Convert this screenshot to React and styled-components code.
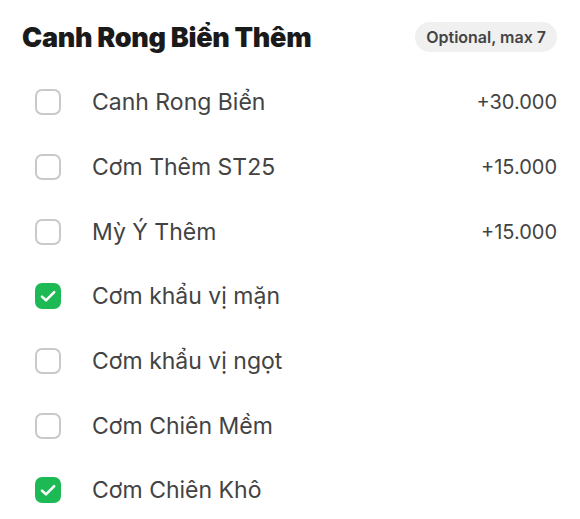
import React from 'react';
import styled, { createGlobalStyle } from 'styled-components';

const GlobalStyle = createGlobalStyle`
  body {
    margin: 0;
    background: #fff;
    font-family: Inter, "Noto Sans", sans-serif;
  }
`;

const Wrapper = styled.div`
  padding: 22px 23px 0 22px;
`;

const Header = styled.div`
  display: flex;
  justify-content: space-between;
  align-items: center;
  height: 30px;
  margin-bottom: 18px;
`;

const Title = styled.h2`
  margin: 0;
  font-size: 27px;
  font-weight: 900;
  color: #1a1a1a;
  letter-spacing: -0.3px;
`;

const Badge = styled.span`
  display: inline-flex;
  align-items: center;
  height: 30px;
  padding: 0 11px;
  border-radius: 15px;
  background: #f0f0f0;
  color: #444;
  font-size: 16px;
  font-weight: 600;
`;

const List = styled.ul`
  list-style: none;
  margin: 0;
  padding: 0;
`;

const Row = styled.li`
  display: flex;
  align-items: center;
  height: 64.7px;
  padding-left: 13px;
`;

const Box = styled.span`
  flex: none;
  width: 26px;
  height: 26px;
  box-sizing: border-box;
  border-radius: 7px;
  border: ${(p) => (p.checked ? 'none' : '2px solid #c9c9c9')};
  background: ${(p) => (p.checked ? '#1db954' : '#fff')};
  display: flex;
  align-items: center;
  justify-content: center;
`;

const Label = styled.span`
  flex: 1;
  margin-left: 31px;
  font-size: 23px;
  color: #434343;
`;

const Price = styled.span`
  font-size: 20px;
  color: #434343;
`;

const items = [
  { name: 'Canh Rong Biển', price: '+30.000' },
  { name: 'Cơm Thêm ST25', price: '+15.000' },
  { name: 'Mỳ Ý Thêm', price: '+15.000' },
  { name: 'Cơm khẩu vị mặn', checked: true },
  { name: 'Cơm khẩu vị ngọt' },
  { name: 'Cơm Chiên Mềm' },
  { name: 'Cơm Chiên Khô', checked: true },
];

const Check = () => (
  <svg width="26" height="26" viewBox="0 0 26 26" fill="none">
    <path d="M7 13.6l4 3.8L19.2 9.2" stroke="#fff" strokeWidth="2.6" strokeLinecap="round" strokeLinejoin="round" />
  </svg>
);

export default function App() {
  return (
    <Wrapper>
      <GlobalStyle />
      <Header>
        <Title>Canh Rong Biển Thêm</Title>
        <Badge>Optional, max 7</Badge>
      </Header>
      <List>
        {items.map((it) => (
          <Row key={it.name}>
            <Box checked={it.checked}>{it.checked && <Check />}</Box>
            <Label>{it.name}</Label>
            {it.price && <Price>{it.price}</Price>}
          </Row>
        ))}
      </List>
    </Wrapper>
  );
}
